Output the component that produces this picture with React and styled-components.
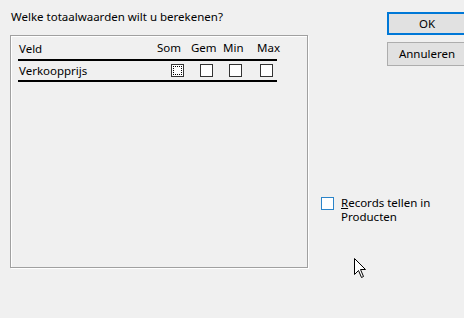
import React from 'react';
import styled, { createGlobalStyle } from 'styled-components';

const GlobalStyle = createGlobalStyle`
    html, body {
        margin: 0;
        padding: 0;
        background: #f0f0f0;
        overflow: hidden;
    }
    body {
        font-family: "Noto Sans", "Open Sans", sans-serif;
        font-size: 11.5px;
        color: #000;
    }
`;

const Dialog = styled.div`
    position: relative;
    width: 464px;
    height: 318px;
    display: flex;
    background: #f0f0f0;
`;

const LeftCol = styled.div`
    display: flex;
    flex-direction: column;
    padding: 8px 0 0 10px;
    width: 298px;
`;

const Title = styled.div`
    padding-left: 1px;
    height: 27px;
    line-height: 17px;
`;

const Panel = styled.div`
    width: 298px;
    height: 233px;
    box-sizing: border-box;
    border: 1px solid #a0a0a0;
    box-shadow: 1px 1px 0 #fff, inset 1px 1px 0 #fff;
    padding: 3px 0 0 7px;
`;

const Row = styled.div`
    display: grid;
    grid-template-columns: 139px 33px 32px 33px 22px;
    align-items: center;
    width: 259px;
    height: ${p => p.head ? 22 : 21}px;
    border-bottom: 2px solid #000;
    box-sizing: border-box;
`;

const Label = styled.div`
    padding-left: 1px;
    line-height: 16px;
`;

const HeadCell = styled.div`
    padding-left: ${p => p.pad}px;
    line-height: 16px;
    padding-bottom: 2px;
    white-space: nowrap;
`;

const Cell = styled.div`
    display: flex;
    padding-left: ${p => p.pad}px;
`;

const Box = styled.span`
    display: inline-block;
    flex: none;
    width: 13px;
    height: 13px;
    box-sizing: border-box;
    border: 1px solid ${p => p.blue ? '#2b84c9' : '#333'};
    background: #fff;
    outline: ${p => p.focus ? '1px dotted #000' : 'none'};
    outline-offset: -3px;
`;

const RightCol = styled.div`
    flex: 1;
    display: flex;
    flex-direction: column;
    padding: 12px 0 0 13px;
`;

const Buttons = styled.div`
    display: flex;
    flex-direction: column;
    gap: 7px;
    margin-left: 66px;
`;

const Button = styled.button`
    width: 80px;
    height: ${p => p.primary ? 23 : 24}px;
    box-sizing: border-box;
    background: #e1e1e1;
    border: ${p => p.primary ? '2px solid #0078d7' : '1px solid #adadad'};
    font-family: "Noto Sans", "Open Sans", sans-serif;
    font-size: 11.5px;
    color: #000;
    padding: 0 0 1px;
    text-align: center;
`;

const CheckOption = styled.label`
    display: flex;
    align-items: flex-start;
    gap: 7px;
    margin-top: 131px;
`;

const OptionText = styled.span`
    line-height: 14px;
    margin-top: -1px;
`;

const Cursor = styled.svg`
    position: absolute;
    left: 354px;
    top: 258px;
`;

const columns = [
    { name: 'Som', head: 0, box: 14 },
    { name: 'Gem', head: 1, box: 10 },
    { name: 'Min', head: 1, box: 7 },
    { name: 'Max', head: 2, box: 5 },
];

const App = () => {
    return (
        <Dialog>
            <GlobalStyle />
            <LeftCol>
                <Title>Welke totaalwaarden wilt u berekenen?</Title>
                <Panel>
                    <Row head>
                        <Label>Veld</Label>
                        {columns.map(c => <HeadCell key={c.name} pad={c.head}>{c.name}</HeadCell>)}
                    </Row>
                    <Row>
                        <Label>Verkoopprijs</Label>
                        {columns.map((c, i) => (
                            <Cell key={c.name} pad={c.box}><Box focus={i === 0} /></Cell>
                        ))}
                    </Row>
                </Panel>
            </LeftCol>
            <RightCol>
                <Buttons>
                    <Button primary>OK</Button>
                    <Button>Annuleren</Button>
                </Buttons>
                <CheckOption>
                    <Box blue />
                    <OptionText><u>R</u>ecords tellen in<br />Producten</OptionText>
                </CheckOption>
            </RightCol>
            <Cursor width="13" height="21" viewBox="0 0 13 21">
                <path d="M0.5 0.5 L0.5 16.5 L4.5 12.5 L7.5 19.5 L9.5 18.5 L6.5 11.5 L11.5 11.5 Z" fill="#fff" stroke="#000" strokeWidth="1" />
            </Cursor>
        </Dialog>
    );
};

export default App;
